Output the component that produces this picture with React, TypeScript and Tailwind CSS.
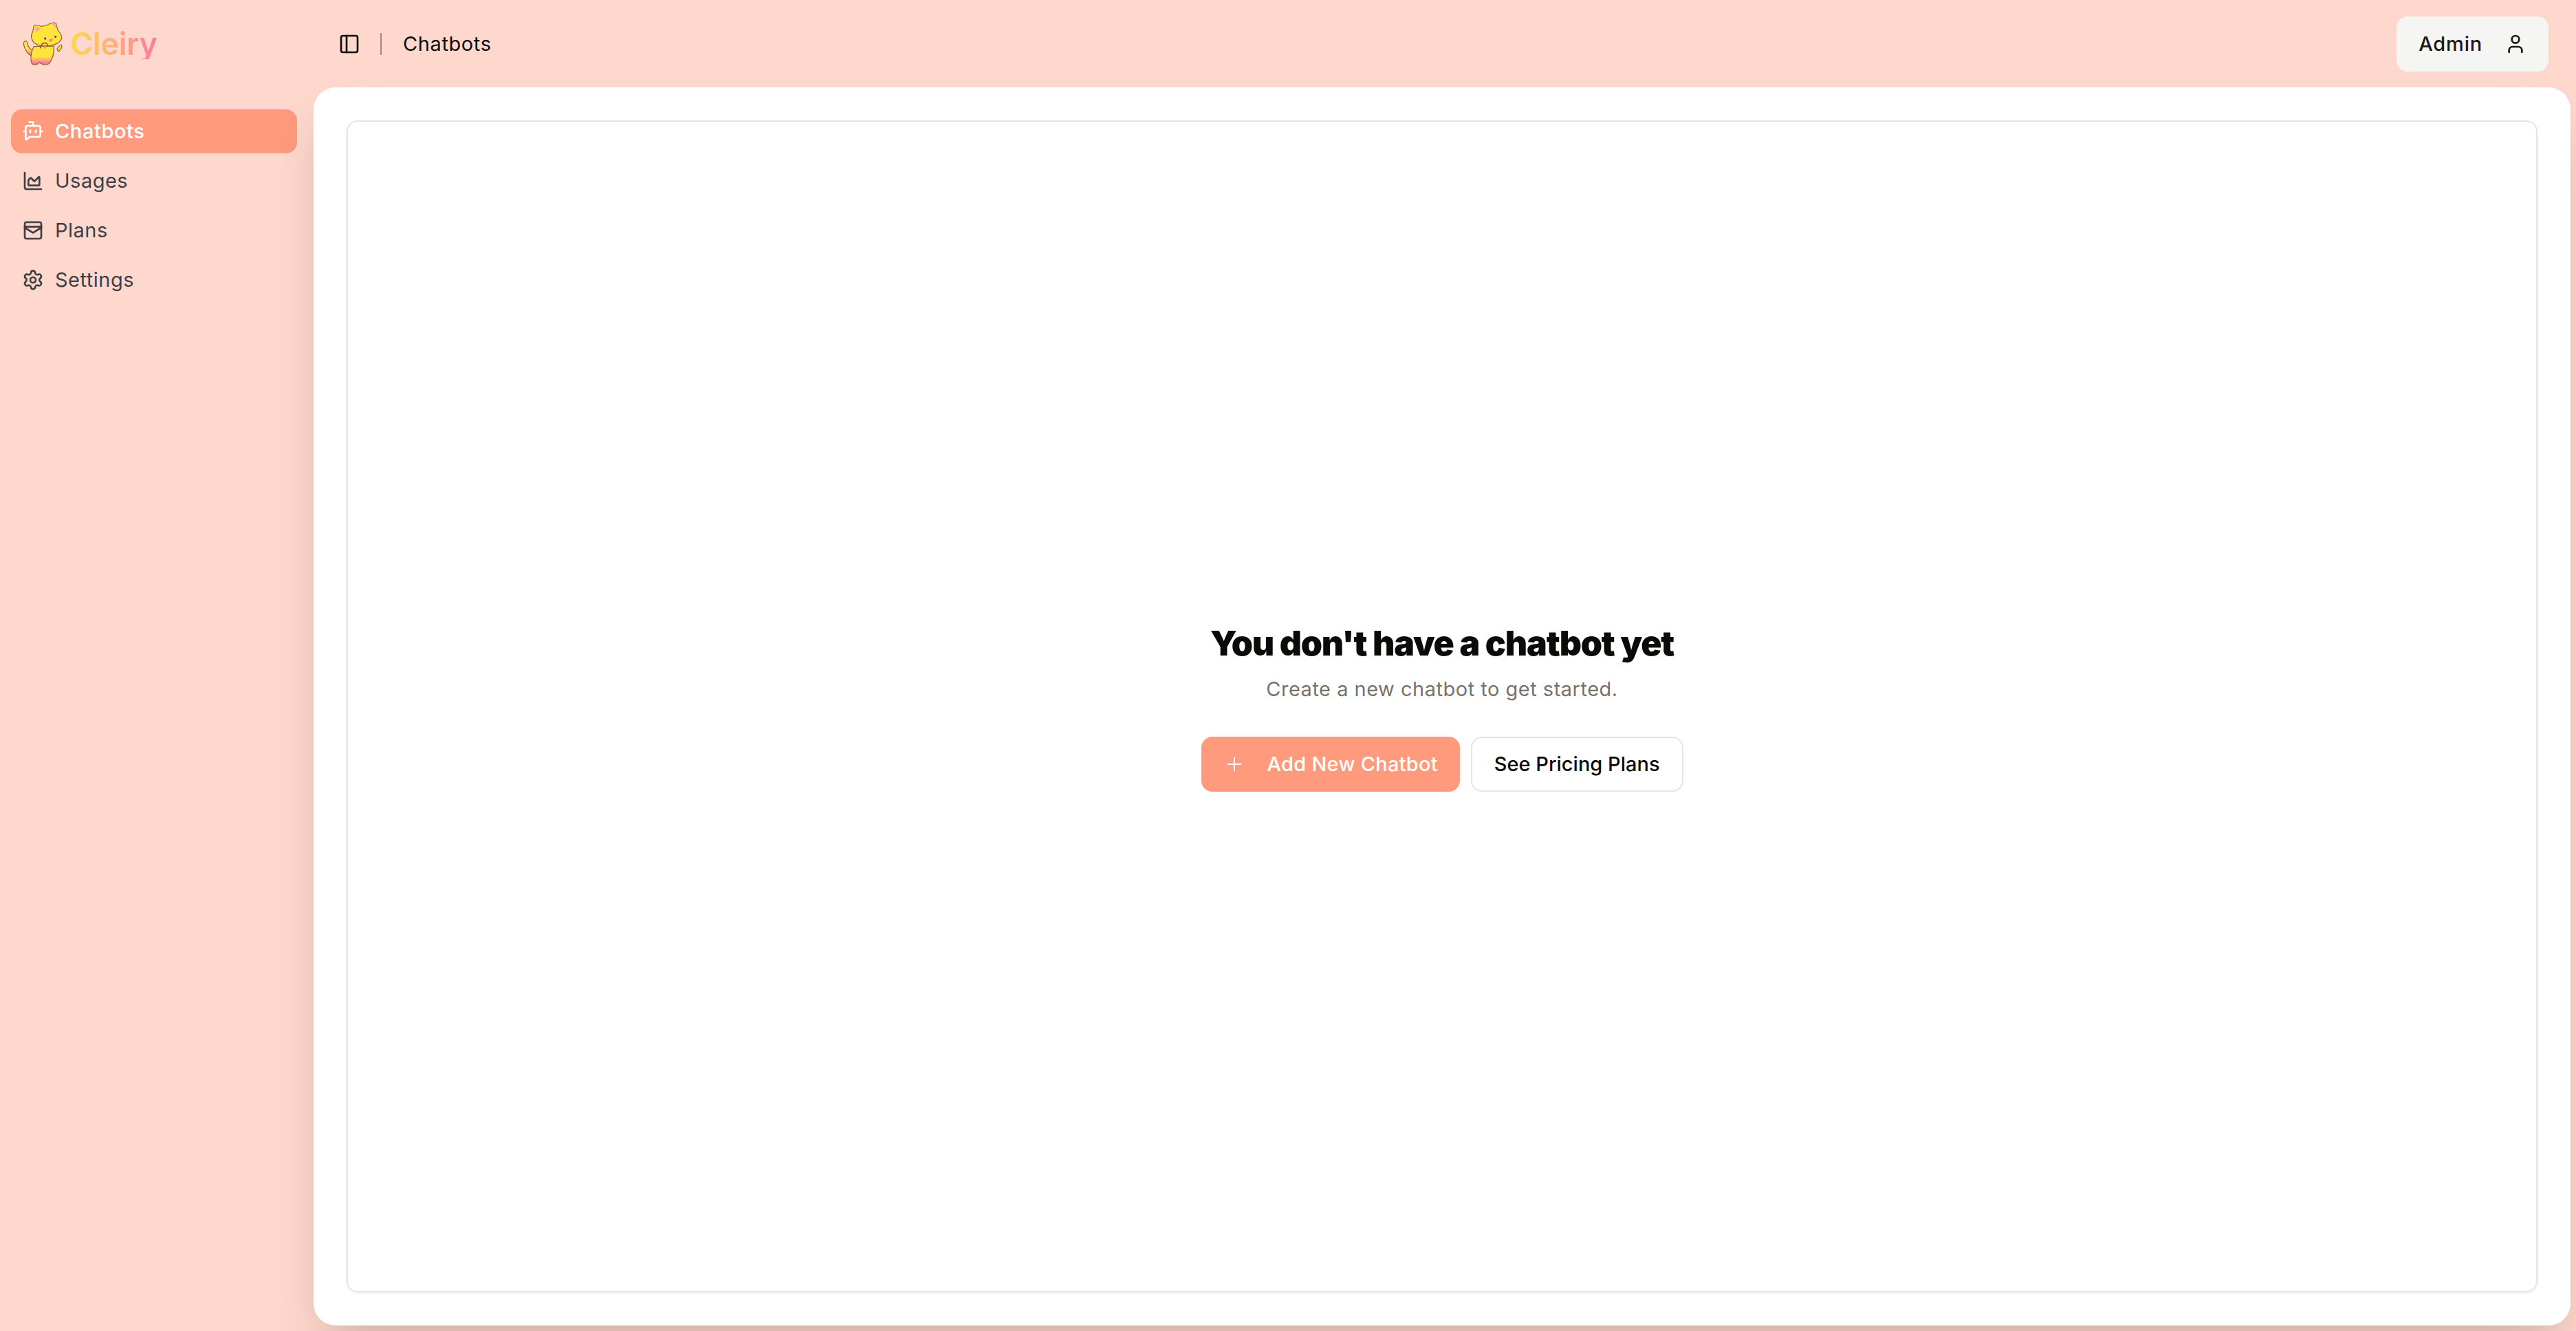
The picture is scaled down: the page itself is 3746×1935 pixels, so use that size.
import React from 'react';
import { BotMessageSquare, ChartArea, PanelLeft, Plus, Settings, User } from 'lucide-react';

function PlansIcon({ className }: { className?: string }) {
  return (
    <svg viewBox="0 0 24 24" fill="none" stroke="currentColor" strokeWidth="2" strokeLinecap="round" strokeLinejoin="round" className={className}>
      <rect x="3" y="3" width="18" height="18" rx="2" />
      <path d="M3 8h18" />
      <path d="M3 9l9 5.5L21 9" />
    </svg>
  );
}

function CatLogo() {
  return (
    <svg viewBox="100 90 180 198" className="w-[60px] h-[66px] shrink-0">
      <defs>
        <linearGradient id="catFill" x1="0" y1="0" x2="0" y2="1">
          <stop offset="0.55" stopColor="#ffe53b" />
          <stop offset="0.95" stopColor="#ff6fa0" />
        </linearGradient>
      </defs>
      <g stroke="#8f6234" strokeWidth="3.5" strokeLinejoin="round" fill="url(#catFill)">
        <path d="M138 240c-18-8-32-32-34-52-1-10 10-16 15-8 4 8 1 24 22 36z" />
        <path d="M250 210c6-8 12-16 19-18 5 6 1 20-14 30z" fill="#ffe53b" />
        <path d="M148 200c-14 28-16 66-6 76 8 6 24 4 32-8 4 10 24 14 38 8 14-10 26-40 24-78z" />
        <path
          d="M150 108c8-6 22 0 32 4 10-2 22-4 30-8 8-8 26-10 34-4 4 12 4 22 8 30 10 10 18 24 16 36-6 14-22 24-40 28-30 6-62 4-80-10-14-14-16-36-6-48 2-10 2-20 6-28z"
          fill="#ffe53b"
        />
      </g>
      <path d="M156 116c8-4 18 2 22 8-8 4-16 10-20 14-4-8-4-16-2-22z" fill="#f9a9a0" />
      <path d="M228 104c6-4 14-4 18-2 2 6 0 12-2 14-6-4-12-8-16-12z" fill="#f9a9a0" />
      <circle cx="198" cy="165" r="5" fill="#6b4423" />
      <circle cx="243" cy="157" r="5" fill="#6b4423" />
      <path d="M213 170c6-2 14-3 19-5 0 8-4 14-10 14-5 0-8-4-9-9z" fill="#ff7f9e" />
      <path d="M178 206c0-12 8-22 18-22 8 0 12 6 13 12" fill="none" stroke="#8f6234" strokeWidth="5" strokeLinecap="round" />
      <path d="M194 200c4-4 10-2 9 3-1 4-5 6-7 8-3-3-4-7-2-11z" fill="#f7a35c" />
    </svg>
  );
}

const navItems = [
  { label: 'Chatbots', Icon: BotMessageSquare, active: true },
  { label: 'Usages', Icon: ChartArea, active: false },
  { label: 'Plans', Icon: PlansIcon, active: false },
  { label: 'Settings', Icon: Settings, active: false },
];

export default function App() {
  return (
    <div className="flex h-screen w-full overflow-hidden bg-[#ffd8cd] font-['Inter','Noto_Sans',sans-serif]">
      <aside className="w-[448px] shrink-0 flex flex-col">
        <div className="h-[127px] flex items-center pl-[33px] gap-[9px]">
          <CatLogo />
          <span className="text-[45px] font-semibold leading-none tracking-[-0.3px] bg-gradient-to-r from-[#ffd93b] to-[#ff7a9c] bg-clip-text text-transparent">
            Cleiry
          </span>
        </div>
        <nav className="flex flex-col gap-2 px-4 pt-8">
          {navItems.map(({ label, Icon, active }) => (
            <a
              key={label}
              className={
                active
                  ? 'h-16 flex items-center gap-4 px-4 rounded-2xl bg-[#ff9b7c] text-white text-[29px] font-medium tracking-[0.6px]'
                  : 'h-16 flex items-center gap-4 px-4 rounded-2xl text-[#3f3f46] text-[29px] tracking-[0.5px]'
              }
            >
              <Icon className="w-8 h-8 shrink-0" />
              <span>{label}</span>
            </a>
          ))}
        </nav>
      </aside>

      <div className="flex-1 min-w-0 flex flex-col pr-2 pb-2 pl-2">
        <header className="h-[127px] shrink-0 flex items-center justify-between pl-9 pr-8">
          <div className="flex items-center">
            <PanelLeft className="w-8 h-8 text-[#0c0a09]" />
            <div className="w-0.5 h-8 bg-[#a8867c] ml-[29px] mr-[31px]" />
            <span className="text-[29px] tracking-[0.6px] text-[#0c0a09]">Chatbots</span>
          </div>
          <button className="h-20 flex items-center gap-8 px-8 rounded-2xl bg-[#f5f5f4] text-[#1c1917] text-[29px] font-medium tracking-[0.8px]">
            Admin
            <User className="w-8 h-8" />
          </button>
        </header>

        <main className="flex-1 min-h-0 flex bg-white rounded-[32px] p-12 shadow-[0_40px_80px_-20px_rgba(0,0,0,0.22)]">
          <div className="flex-1 flex flex-col items-center justify-center border-2 border-[#e5e5e5] rounded-2xl shadow-[0_2px_4px_rgba(0,0,0,0.05)]">
            <h1 className="text-[50px] font-black leading-[64px] tracking-[-1.2px] text-[#0c0a09]">You don't have a chatbot yet</h1>
            <p className="text-[29px] leading-10 mt-[15px] tracking-[0.5px] text-[#78716c]">Create a new chatbot to get started.</p>
            <div className="flex items-center gap-4 mt-[49px]">
              <button className="h-20 flex items-center gap-8 px-8 rounded-2xl bg-[#ff9b7c] text-white text-[29px] font-medium tracking-[0.25px]">
                <Plus className="w-8 h-8" strokeWidth={1.5} />
                Add New Chatbot
              </button>
              <button className="h-20 flex items-center px-8 rounded-2xl bg-white border-2 border-[#e5e5e5] text-[#0c0a09] text-[29px] font-medium">
                See Pricing Plans
              </button>
            </div>
          </div>
        </main>
      </div>
    </div>
  );
}
